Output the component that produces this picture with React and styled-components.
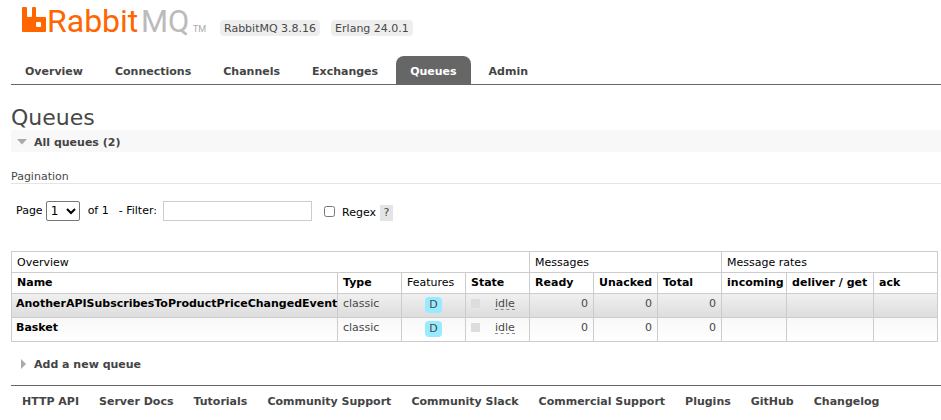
import React, { useState } from "react";
import styled, { createGlobalStyle } from "styled-components";

const GlobalStyle = createGlobalStyle`
  *, *::before, *::after { box-sizing: border-box; }
  body {
    margin: 0;
    background: #fff;
    color: #484848;
    font-family: Verdana, "DejaVu Sans", sans-serif;
    font-size: 11px;
    line-height: 14px;
  }
`;

const Page = styled.div`
  padding-left: 11px;
  overflow-x: hidden;
`;

const Header = styled.header`
  display: flex;
  align-items: flex-start;
  gap: 11px;
  height: 56px;
`;

const LogoLink = styled.a`
  display: block;
  width: 187px;
  margin-left: 11px;
`;

const LogoSvg = styled.svg`
  display: block;
  overflow: visible;
`;

const LogoText = styled.text`
  font-family: Roboto, sans-serif;
  font-size: ${(p) => p.$size}px;
  fill: ${(p) => p.$color};
`;

const Version = styled.span`
  margin-top: 20px;
  padding: 2px 4px 0;
  height: 16px;
  border-radius: 4px;
  background: #eee;
  line-height: 14px;
  white-space: nowrap;
`;

const Tabs = styled.nav`
  display: flex;
  gap: 4px;
  border-bottom: 1px solid #666;
`;

const Tab = styled.a`
  padding: 9px 14px 5px;
  border-radius: 8px 8px 0 0;
  font-weight: bold;
  text-decoration: none;
  white-space: nowrap;
  color: ${(p) => (p.$active ? "#fff" : "#444")};
  background: ${(p) => (p.$active ? "#666" : "transparent")};
`;

const Title = styled.h1`
  margin: 20px 0 0;
  font-size: 22px;
  line-height: 25px;
  font-weight: normal;
`;

const SectionToggle = styled.button`
  display: flex;
  align-items: center;
  gap: 7px;
  width: 100%;
  height: 22px;
  padding: 3px 0 0 5px;
  border: 0;
  background: ${(p) => (p.$open ? "#f8f8f8" : "transparent")};
  color: #444;
  font: inherit;
  font-weight: bold;
  text-align: left;
  cursor: pointer;
`;

const ArrowIcon = styled.svg`
  display: block;
  width: 11px;
  height: 11px;
  fill: #aaa;
`;

const SubHeading = styled.h3`
  margin: 17px 0 17px;
  padding-top: 1px;
  border-bottom: 1px solid #e4e4e4;
  font-size: 11px;
  line-height: 13px;
  font-weight: normal;
`;

const FilterBar = styled.form`
  display: flex;
  align-items: center;
  height: 20px;
  padding-left: 5px;
  color: #000;
  white-space: nowrap;
`;

const Field = styled.label`
  display: flex;
  align-items: center;
  gap: ${(p) => p.$gap}px;
`;

const PageSelect = styled.select`
  width: 34px;
  height: 20px;
  border: 1px solid #767676;
  border-radius: 2px;
  background: #fff;
  color: #000;
  font: inherit;
  font-size: 12px;
`;

const PageCount = styled.span`
  margin: 0 10px 0 8px;
`;

const FilterInput = styled.input`
  width: 149px;
  height: 20px;
  border: 1px solid #ccc;
  padding: 2px;
  font: inherit;
`;

const RegexField = styled(Field)`
  margin: 3px 4px 0 12px;
`;

const Checkbox = styled.input`
  width: 11px;
  height: 11px;
  margin: 0 0 3px;
`;

const HelpButton = styled.button`
  width: 13px;
  height: 16px;
  margin-top: 3px;
  padding: 0;
  border: 0;
  background: #e4e4e4;
  color: #444;
  font: inherit;
  cursor: pointer;
`;

const QueueTable = styled.table`
  margin: 30px 0 10px;
  width: 927px;
  table-layout: fixed;
  border-collapse: collapse;
`;

const Col = styled.col`
  width: ${(p) => p.$width}px;
`;

const HeadCell = styled.th`
  height: 21px;
  padding: ${(p) => (p.$group ? "4px 5px 2px" : "3px 5px")};
  border: 1px solid #ccc;
  color: #000;
  font-weight: ${(p) => (p.$plain ? "normal" : "bold")};
  text-align: left;
  white-space: nowrap;
`;

const Row = styled.tr`
  background: ${(p) =>
    p.$shaded
      ? "linear-gradient(#f0f0f0, #dcdcdc)"
      : "linear-gradient(#f8f8f8, #fff)"};
`;

const Cell = styled.td`
  height: 24px;
  padding: 3px 5px;
  border: 1px solid #ccc;
  vertical-align: top;
  white-space: nowrap;
  text-align: ${(p) => p.$align || "left"};
`;

const NameCell = styled(Cell)`
  padding: 3px 2px 3px 4px;
`;

const QueueLink = styled.a`
  color: #000;
  font-weight: bold;
  text-decoration: none;
`;

const Feature = styled.abbr`
  display: inline-block;
  height: 16px;
  padding: 1px 4px;
  border-radius: 4px;
  background: #98ebff;
  text-decoration: none;
`;

const State = styled.div`
  display: flex;
  align-items: flex-start;
  gap: 15px;
`;

const StateMark = styled.span`
  width: 9px;
  height: 9px;
  margin-top: 2px;
  background: #ddd;
`;

const StateName = styled.abbr`
  height: 13px;
  border-bottom: 1px dashed #888;
  text-decoration: none;
`;

const Footer = styled.footer`
  display: flex;
  gap: 20px;
  margin-top: 11px;
  padding: 9px 0 9px 11px;
  border-top: 1px solid #666;
`;

const FooterLink = styled.a`
  color: #444;
  font-weight: bold;
  text-decoration: none;
  white-space: nowrap;
`;

const tabs = ["Overview", "Connections", "Channels", "Exchanges", "Queues", "Admin"];
const footerLinks = [
  "HTTP API",
  "Server Docs",
  "Tutorials",
  "Community Support",
  "Community Slack",
  "Commercial Support",
  "Plugins",
  "GitHub",
  "Changelog",
];
const columns = [
  { name: "Name", width: 326 },
  { name: "Type", width: 64 },
  { name: "Features", width: 64, plain: true },
  { name: "State", width: 64 },
  { name: "Ready", width: 64 },
  { name: "Unacked", width: 64 },
  { name: "Total", width: 64 },
  { name: "incoming", width: 65 },
  { name: "deliver / get", width: 87 },
  { name: "ack", width: 64 },
];
const queues = [
  { name: "AnotherAPISubscribesToProductPriceChangedEvent", ready: 0, unacked: 0, total: 0 },
  { name: "Basket", ready: 0, unacked: 0, total: 0 },
];

function Logo() {
  return (
    <LogoLink href="#/" aria-label="RabbitMQ">
      <LogoSvg width="187" height="44" viewBox="0 0 187 44">
        <path
          fill="#f60"
          fillRule="evenodd"
          d="M1 7h3q1 0 1 1v8q0 1 1 1h3q1 0 1-1V8q0-1 1-1h2q1 0 1 1v8q0 1 1 1h8q1 0 1 1v13q0 1-1 1H1q-1 0-1-1V8q0-1 1-1zM15 22q-1 0-1 1v3q0 1 1 1h3q1 0 1-1v-3q0-1-1-1z"
        />
        <LogoText x="25" y="32" $size={32} $color="#f60">Rabbit</LogoText>
        <LogoText x="119" y="32" $size={31} $color="#bbb">MQ</LogoText>
        <LogoText x="171" y="32" $size={9} $color="#aaa">TM</LogoText>
      </LogoSvg>
    </LogoLink>
  );
}

function Arrow({ open }) {
  return (
    <ArrowIcon viewBox="0 0 11 11" aria-hidden="true">
      <path d={open ? "M1 2H11L6 7.5Z" : "M5 0L10 5L5 10Z"} />
    </ArrowIcon>
  );
}

function QueueRow({ queue, shaded }) {
  return (
    <Row $shaded={shaded}>
      <NameCell>
        <QueueLink href={`#/queues/${queue.name}`}>{queue.name}</QueueLink>
      </NameCell>
      <Cell>classic</Cell>
      <Cell $align="center">
        <Feature title="durable: true">D</Feature>
      </Cell>
      <Cell>
        <State>
          <StateMark />
          <StateName>idle</StateName>
        </State>
      </Cell>
      <Cell $align="right">{queue.ready}</Cell>
      <Cell $align="right">{queue.unacked}</Cell>
      <Cell $align="right">{queue.total}</Cell>
      <Cell />
      <Cell />
      <Cell />
    </Row>
  );
}

export default function App() {
  const [listOpen, setListOpen] = useState(true);
  const [addOpen, setAddOpen] = useState(false);

  return (
    <Page>
      <GlobalStyle />
      <Header>
        <Logo />
        <Version>RabbitMQ 3.8.16</Version>
        <Version>Erlang 24.0.1</Version>
      </Header>
      <Tabs>
        {tabs.map((tab) => (
          <Tab key={tab} href={`#/${tab.toLowerCase()}`} $active={tab === "Queues"}>
            {tab}
          </Tab>
        ))}
      </Tabs>
      <main>
        <Title>Queues</Title>
        <SectionToggle $open={listOpen} aria-expanded={listOpen} onClick={() => setListOpen(!listOpen)}>
          <Arrow open={listOpen} />
          All queues (2)
        </SectionToggle>
        {listOpen && (
          <>
            <SubHeading>Pagination</SubHeading>
            <FilterBar onSubmit={(e) => e.preventDefault()}>
              <Field $gap={3}>
                Page
                <PageSelect>
                  <option>1</option>
                </PageSelect>
              </Field>
              <PageCount>of 1</PageCount>
              <Field $gap={6}>
                - Filter:
                <FilterInput type="text" />
              </Field>
              <RegexField $gap={7}>
                <Checkbox type="checkbox" />
                Regex
              </RegexField>
              <HelpButton type="button">?</HelpButton>
            </FilterBar>
            <QueueTable>
              <colgroup>
                {columns.map((c) => (
                  <Col key={c.name} $width={c.width} />
                ))}
              </colgroup>
              <thead>
                <tr>
                  <HeadCell $group $plain colSpan={4}>Overview</HeadCell>
                  <HeadCell $group $plain colSpan={3}>Messages</HeadCell>
                  <HeadCell $group $plain colSpan={3}>Message rates</HeadCell>
                </tr>
                <tr>
                  {columns.map((c) => (
                    <HeadCell key={c.name} $plain={c.plain}>{c.name}</HeadCell>
                  ))}
                </tr>
              </thead>
              <tbody>
                {queues.map((q, i) => (
                  <QueueRow key={q.name} queue={q} shaded={i % 2 === 0} />
                ))}
              </tbody>
            </QueueTable>
          </>
        )}
        <SectionToggle $open={addOpen} aria-expanded={addOpen} onClick={() => setAddOpen(!addOpen)}>
          <Arrow open={addOpen} />
          Add a new queue
        </SectionToggle>
      </main>
      <Footer>
        {footerLinks.map((link) => (
          <FooterLink key={link} href="#/">
            {link}
          </FooterLink>
        ))}
      </Footer>
    </Page>
  );
}
